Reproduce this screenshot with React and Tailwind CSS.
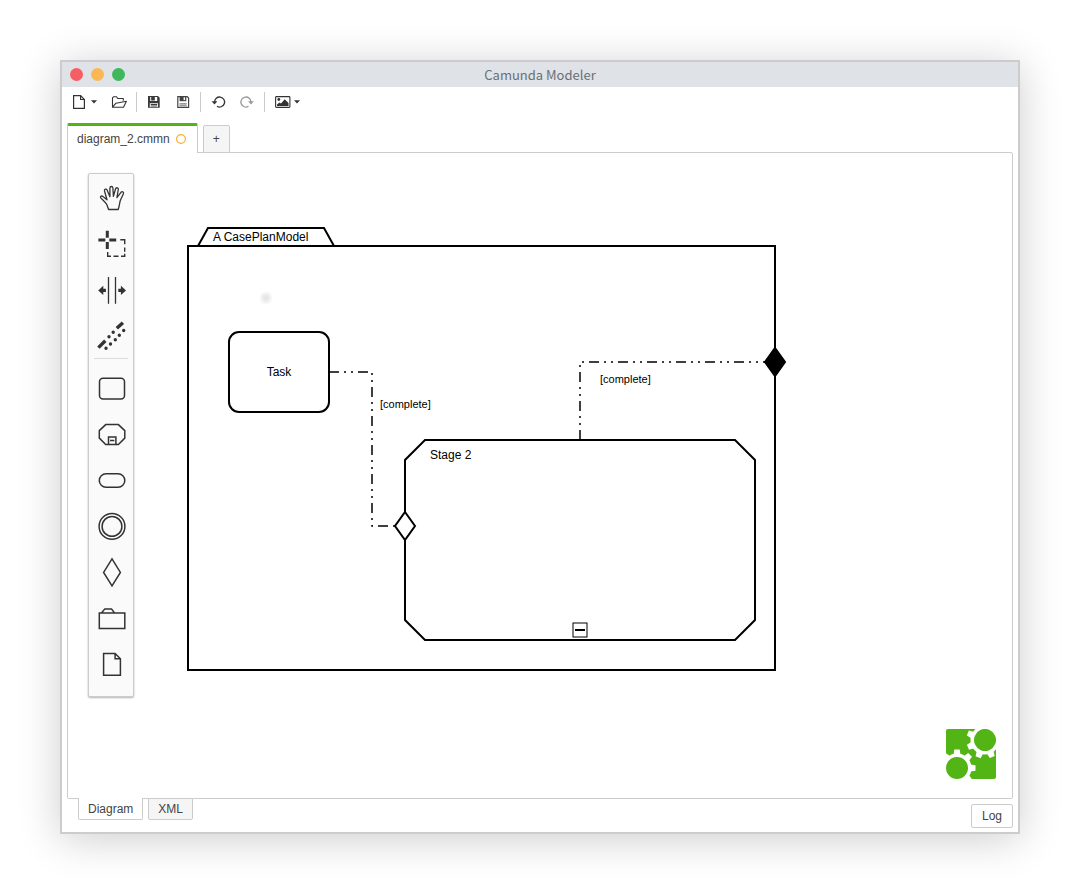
import React from "react";

function ToolButton({ label, className = "", children }) {
  return (
    <button type="button" aria-label={label} title={label} className={`flex h-6 items-center ${className}`}>
      {children}
    </button>
  );
}

function Caret() {
  return (
    <svg width="6" height="4" viewBox="0 0 6 4" fill="#333" aria-hidden="true">
      <path d="M0 0.3h6L3 3.6z" />
    </svg>
  );
}

function Separator() {
  return <span className="mx-[9px] h-5 w-px bg-[#ccc]" />;
}

function Floppy({ filled }) {
  return filled ? (
    <svg width="16" height="16" viewBox="0 0 16 16" aria-hidden="true">
      <path fill="#3a3a3a" fillRule="evenodd" d="M2 2h10L13.700 3.700V13.700H2zM4.200 3v4h7v-4zM3.800 9.200v3.700h8.200V9.200z" />
      <path fill="#3a3a3a" d="M5.200 2.500h3.600v4H5.200zM4.700 9.900h6.500v1H4.700zM4.700 11.500h6.500v1H4.700z" />
    </svg>
  ) : (
    <svg width="16" height="16" viewBox="0 0 16 16" aria-hidden="true">
      <path fill="none" stroke="#444" strokeWidth="1.200" d="M2.800 2.600h9.400l1.400 1.400v9.400H2.800z" />
      <path fill="#444" d="M4.600 2.600h6.700v4.600H4.600z" />
      <path fill="#fff" d="M8.600 3.300h1.500v2.800H8.600z" />
      <path fill="#777" d="M4.500 9.300h7.200v1.100H4.500zM4.500 11.200h7.200v1.100H4.500z" />
    </svg>
  );
}

function RotateArrow({ color, flip }) {
  return (
    <svg width="16" height="16" viewBox="0 0 16 16" aria-hidden="true">
      <g transform={flip ? "matrix(-1 0 0 1 15.500 0)" : undefined}>
        <path d="M3.600 8.200A5 5 0 1 1 6 12.300" fill="none" stroke={color} strokeWidth="1.300" />
        <path d="M0.600 7.300h5.800L3.500 10.500z" fill={color} />
      </g>
    </svg>
  );
}

function Toolbar() {
  return (
    <div role="toolbar" aria-label="Main" className="flex h-[30px] items-center pl-1">
      <ToolButton label="New diagram" className="gap-1">
        <svg width="16" height="16" viewBox="0 0 16 16" fill="none" stroke="#333" strokeWidth="1.200" aria-hidden="true">
          <path d="M2.600 1.700h7l3.800 3.800v8.800H2.600z" />
          <path d="M9.600 1.700v3.800h3.800" />
        </svg>
        <Caret />
      </ToolButton>
      <ToolButton label="Open diagram" className="ml-3.5">
        <svg width="16" height="16" viewBox="0 0 16 16" fill="none" stroke="#333" strokeWidth="1.100" strokeLinejoin="round" aria-hidden="true">
          <path d="M1.500 13V3.800l1-1h3l1.200 1.700h5.600v2.300" />
          <path d="M1.500 13.200L5 9.200 15.400 7.300 12.500 13.200z" />
        </svg>
      </ToolButton>
      <Separator />
      <ToolButton label="Save diagram">
        <Floppy filled />
      </ToolButton>
      <ToolButton label="Save diagram as" className="ml-[13px]">
        <Floppy />
      </ToolButton>
      <Separator />
      <ToolButton label="Undo" className="ml-px">
        <RotateArrow color="#333" />
      </ToolButton>
      <ToolButton label="Redo" className="ml-3">
        <RotateArrow color="#999" flip />
      </ToolButton>
      <Separator />
      <ToolButton label="Export as image" className="ml-px gap-[3px]">
        <svg width="16" height="16" viewBox="0 0 16 16" aria-hidden="true">
          <rect x="0.600" y="2.600" width="14.300" height="10.800" rx="0.800" fill="none" stroke="#333" strokeWidth="1.100" />
          <circle cx="3.800" cy="5.500" r="1.400" fill="#333" />
          <path d="M2 12V10.500l2.500-2 1.500 1 3.700-4.300L13.500 9v3z" fill="#333" />
        </svg>
        <Caret />
      </ToolButton>
    </div>
  );
}

const lasso = (
  <>
    <path d="M2.400 10.500h6.900v3H2.400zM13.300 10.500h6.900v3h-6.900zM9.800 2.800h3v6.900h-3zM9.800 14h3v6.900h-3z" fill="#333" />
    <path
      d="M24.300 11.700h4.400v4.600M28.700 19.500v4.300M28.700 25.800v2.500H25M22.500 28.300h-5M15 28.300h-3.300v-4.300"
      fill="none"
      stroke="#333"
      strokeWidth="1.400"
    />
  </>
);

const paletteTools = [
  [
    "Hand tool",
    <path
      d="M12.600 27.500L10.800 22.500C9 19.500 6 17.500 4.600 15.600C4 14.300 5.800 13.500 6.900 14.500L11 17.800L8.500 9C8 7 10.300 6.300 11.100 8.100L13.900 14.700L13.900 6C14 4 16.700 4 16.900 6L17.400 14.400L19.600 6.800C20.200 5 22.700 5.700 22.300 7.500L20.900 15.700L25 10.300C26.400 8.900 28.300 10.200 27.300 11.900L24.300 18.500C23.500 21 23.300 24.500 22.200 27.500z"
      fill="none"
      stroke="#333"
      strokeWidth="1.300"
      strokeLinejoin="round"
    />,
  ],
  ["Lasso tool", lasso],
  [
    "Space tool",
    <>
      <path d="M12.500 3v26.800M19.500 3v26.800" stroke="#333" strokeWidth="1.300" />
      <path d="M2.200 16.400L7.300 11.800v3h2.600v3.200H7.300v3zM30 16.400L24.900 11.800v3h-2.600v3.200h2.600v3z" fill="#333" />
    </>,
  ],
  [
    "Connect tool",
    <g fill="none" stroke="#333" strokeWidth="3.400">
      <path d="M2.400 27.600L9.300 20.700M20.800 8.300L26.900 2.700" />
      <path
        d="M13 16.700h.01M17.200 12.300h.01M10 28.300h.01M14.500 24h.01M19.300 19.700h.01M23.300 15.300h.01M27.700 10.500h.01"
        strokeLinecap="round"
      />
    </g>,
  ],
];

const paletteShapes = [
  ["Create task", <rect x="3.500" y="6.300" width="25" height="20.700" rx="3.500" />],
  [
    "Create stage",
    <>
      <path d="M9.700 6.600h12.700l6.400 6v7.500l-6.400 6.400H9.700L3.300 20.100v-7.500z" />
      <path d="M12.500 26.500v-7.400h7.400v7.400M14 22.600h4.400" />
    </>,
  ],
  ["Create milestone", <rect x="3.300" y="9.700" width="25.500" height="13.500" rx="6.700" />],
  [
    "Create event listener",
    <>
      <circle cx="16" cy="16.400" r="12.900" />
      <circle cx="16" cy="16.400" r="9.900" />
    </>,
  ],
  ["Create criterion", <path d="M16 2.900L24.400 16.400L16 29.900L7.600 16.400z" />],
  ["Create case plan model", <path d="M3.300 11h25.500v15.500H3.300zM5.500 11L8.800 6.900h6.700L18.500 11" />],
  ["Create case file item", <path d="M7.600 5.500h11.500l5.300 5.300v16.500H7.600zM19.100 5.500v5.300h5.300" />],
];

function PaletteEntry({ label, children }) {
  return (
    <button type="button" aria-label={label} title={label} className="flex h-[46px] w-full items-center justify-center pl-0.5">
      <svg width="32" height="32" viewBox="0 0 32 32" fill="none" stroke="none" aria-hidden="true">
        {children}
      </svg>
    </button>
  );
}

function Palette() {
  return (
    <div className="absolute left-5 top-5 w-[46px] rounded-xs border border-[#ccc] bg-[#fafafa] pb-[9px] pt-px shadow-[0_1px_2px_rgba(0,0,0,0.3)]">
      {paletteTools.map(([label, icon]) => (
        <PaletteEntry key={label} label={label}>
          {icon}
        </PaletteEntry>
      ))}
      <hr className="mx-[5px] -mt-px mb-[6px] border-t border-[#ddd]" />
      {paletteShapes.map(([label, icon]) => (
        <PaletteEntry key={label} label={label}>
          <g stroke="#333" strokeWidth="1.500">{icon}</g>
        </PaletteEntry>
      ))}
    </div>
  );
}

function Diagram() {
  return (
    <svg
      className="absolute inset-0 h-full w-full font-['Liberation_Sans',Arial,sans-serif] text-xs"
      role="img"
      aria-label="A CasePlanModel"
    >
      <defs>
        <radialGradient id="spot">
          <stop offset="0" stopColor="#000" stopOpacity="0.120" />
          <stop offset="0.500" stopColor="#000" stopOpacity="0.070" />
          <stop offset="1" stopColor="#000" stopOpacity="0" />
        </radialGradient>
      </defs>
      <g transform="translate(120 93)">
        <g fill="#fff" stroke="#000" strokeWidth="2">
          <path d="M10 0L20 -18H136L146 0z" />
          <rect width="587" height="424" />
          <rect x="41" y="86" width="100" height="80" rx="10" />
          <path d="M237 194H547L567 214V374L547 394H237L217 374V214z" />
        </g>
        <g fill="none" stroke="#000" strokeWidth="1.500" strokeDasharray="10 5 2 5 2 5">
          <path d="M141 126H184V280H207" />
          <path d="M392 194V116H577" />
        </g>
        <path d="M217 266L227 280L217 294L207 280z" fill="#fff" stroke="#000" strokeWidth="2" />
        <path d="M587 102L597 116L587 130L577 116z" fill="#000" stroke="#000" strokeWidth="2" />
        <rect x="385" y="377" width="14" height="14" fill="#fff" stroke="#000" />
        <path d="M387 384H397" stroke="#000" strokeWidth="2" />
        <circle cx="78" cy="52" r="7" fill="url(#spot)" />
        <text x="25" y="-5">A CasePlanModel</text>
        <text x="91" y="130" textAnchor="middle">Task</text>
        <text x="242" y="213">Stage 2</text>
        <g className="text-[11px]">
          <text x="192" y="162">[complete]</text>
          <text x="412" y="137">[complete]</text>
        </g>
      </g>
    </svg>
  );
}

function Gear({ x, y, start }) {
  return (
    <g transform={`translate(${x} ${y}) rotate(${start})`}>
      <circle r="14.500" fill="#fff" />
      {[0, 45, 90, 135, 180, 225, 270, 315].map((a) => (
        <path key={a} d="M13 -3.500L18.500 -2.700V2.700L13 3.500z" fill="#fff" transform={`rotate(${a})`} />
      ))}
      <circle r="11" fill="#52b415" />
    </g>
  );
}

function Logo() {
  return (
    <a href="#about" aria-label="About" className="absolute bottom-[19px] right-4">
      <svg width="50" height="50" viewBox="0 0 50 50" aria-hidden="true">
        <path d="M2 0H39V11H50V48Q50 50 48 50H11V39H0V2Q0 0 2 0z" fill="#52b415" />
        <Gear x={39} y={11} start={22} />
        <Gear x={11} y={39} start={0} />
      </svg>
    </a>
  );
}

export default function App() {
  return (
    <div className="flex min-h-screen flex-col bg-white px-[60px] pb-[60px] pt-[60px] font-['Liberation_Sans',Arial,sans-serif] text-xs text-[#444]">
      <main className="flex flex-1 flex-col border-2 border-[#ccc] bg-white shadow-[0_5px_40px_rgba(0,0,0,0.2)]">
        <header className="flex h-[25px] items-center bg-[#dfe3e8] px-2">
          <div className="flex flex-1 gap-2">
            <button type="button" aria-label="Close" className="size-[13px] rounded-full bg-[#f65e65]" />
            <button type="button" aria-label="Minimize" className="size-[13px] rounded-full bg-[#fbb753]" />
            <button type="button" aria-label="Maximize" className="size-[13px] rounded-full bg-[#3fb75c]" />
          </div>
          <h1 className="font-['Noto_Sans_CJK_SC',sans-serif] text-[13px] leading-6 text-[#6b6f72]">Camunda Modeler</h1>
          <div className="flex-1" />
        </header>
        <div className="flex flex-1 flex-col px-[5px] pb-1">
          <Toolbar />
          <nav aria-label="Open files" className="relative z-10 -mb-px mt-1.5 flex items-end gap-[5px]">
            <button
              type="button"
              className="flex h-[30px] items-center gap-1.5 rounded-t-xs border-x border-t-[3px] border-x-[#ccc] border-t-[#52b415] bg-white pb-0.5 pl-[9px] pr-[11px]"
            >
              diagram_2.cmmn
              <svg width="10" height="10" viewBox="0 0 10 10" aria-hidden="true">
                <circle cx="5" cy="5" r="4.400" fill="none" stroke="#fbb02d" strokeWidth="1.200" />
              </svg>
            </button>
            <button
              type="button"
              aria-label="New tab"
              className="h-7 w-[27px] rounded-t-xs border border-[#ccc] bg-[#f5f5f5]"
            >
              +
            </button>
          </nav>
          <section aria-label="Canvas" className="relative min-h-[600px] flex-1 rounded-xs rounded-tl-none border border-[#ccc] bg-white">
            <Diagram />
            <Palette />
            <Logo />
          </section>
          <footer className="relative -mt-px flex items-start justify-between">
            <nav aria-label="Views" className="flex gap-[5px] pl-[11px]">
              <button type="button" className="h-[22px] rounded-b-xs border-x border-b border-[#ccc] bg-white px-[9px]">
                Diagram
              </button>
              <button type="button" className="h-[22px] rounded-b-xs border border-[#ccc] bg-[#f5f5f5] px-[9px]">
                XML
              </button>
            </nav>
            <button type="button" className="mt-1.5 h-6 w-[42px] rounded-xs border border-[#ccc] bg-white">
              Log
            </button>
          </footer>
        </div>
      </main>
    </div>
  );
}
